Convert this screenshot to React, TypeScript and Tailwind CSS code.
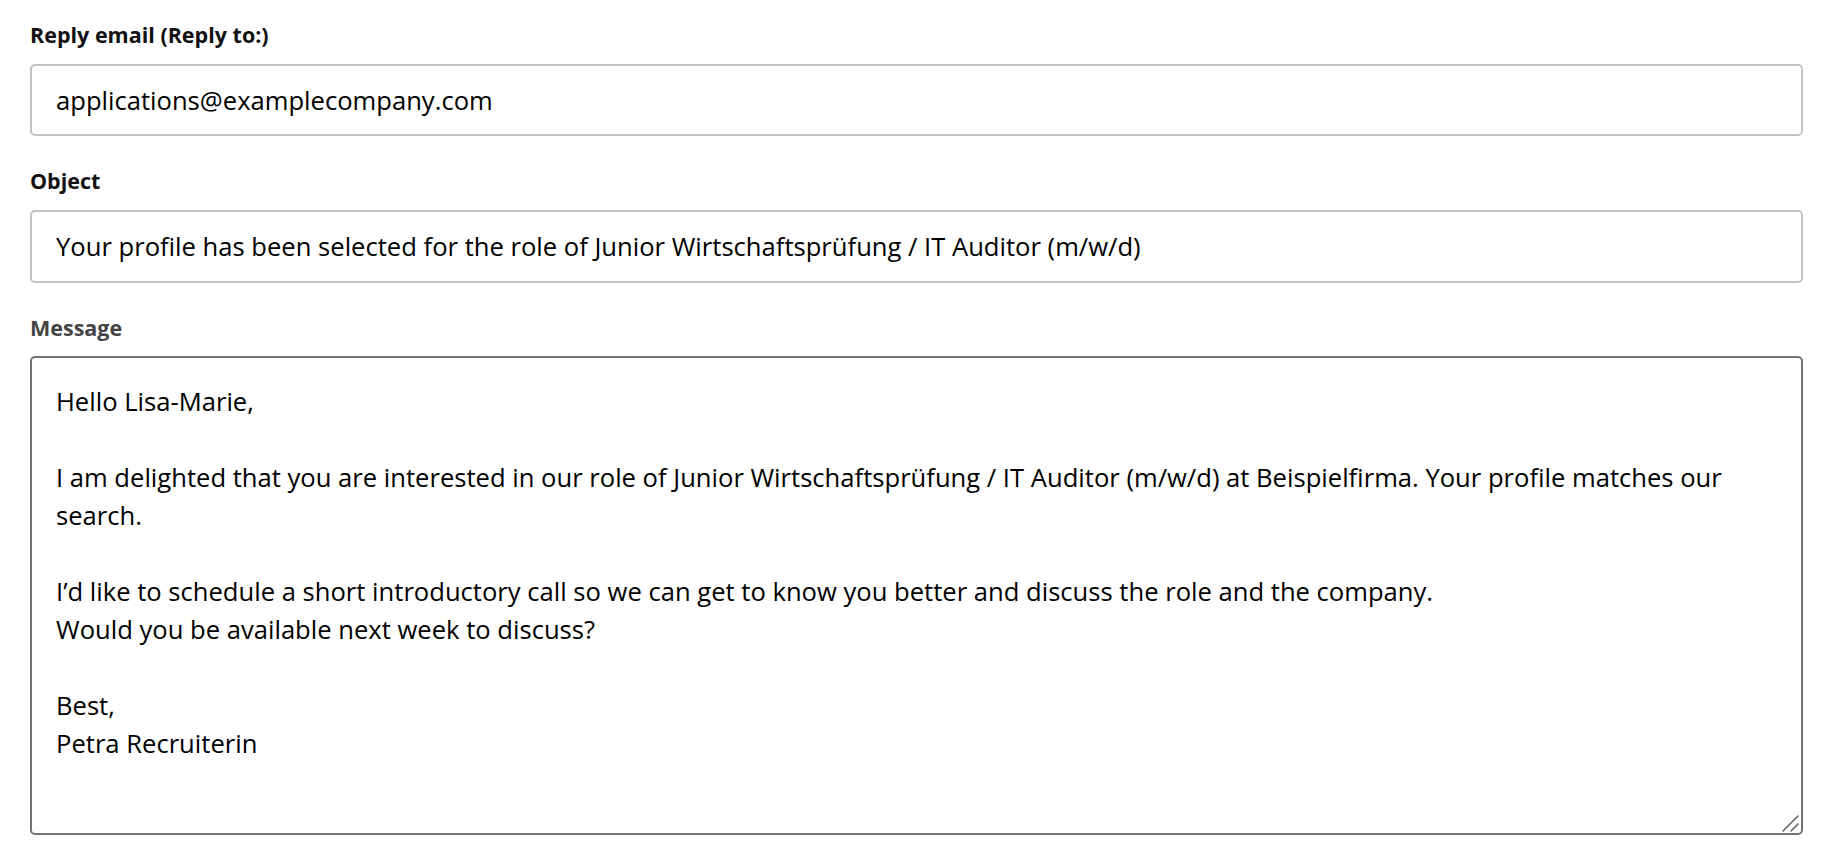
import React from "react";

const message = `Hello Lisa-Marie,

I am delighted that you are interested in our role of Junior Wirtschaftsprüfung / IT Auditor (m/w/d) at Beispielfirma. Your profile matches our search.

I’d like to schedule a short introductory call so we can get to know you better and discuss the role and the company.
Would you be available next week to discuss?

Best,
Petra Recruiterin`;

export default function App() {
  return (
    <div className="w-[1824px] h-[860px] bg-white pl-[30px] pr-[21px] pt-[20px] flex flex-col overflow-hidden font-['Open_Sans','Noto_Sans',sans-serif]">
      <label className="block text-[21.5px] leading-[30px] font-bold text-[#111]">
        Reply email (Reply to:)
      </label>
      <input
        readOnly
        value="applications@examplecompany.com"
        className="mt-[14px] h-[72px] w-full rounded-[5px] border-2 border-[#c2c2c2] px-[24px] text-[25.6px] text-black outline-none"
      />
      <label className="mt-[30px] block text-[21.5px] leading-[30px] font-bold text-[#111]">
        Object
      </label>
      <input
        readOnly
        value="Your profile has been selected for the role of Junior Wirtschaftsprüfung / IT Auditor (m/w/d)"
        className="mt-[14px] h-[73px] w-full rounded-[5px] border-2 border-[#c2c2c2] px-[24px] text-[25.6px] text-black outline-none"
      />
      <label className="mt-[30px] block text-[21.5px] leading-[30px] font-bold text-[#444]">
        Message
      </label>
      <div className="relative mt-[13px] h-[479px] w-full">
        <textarea
          readOnly
          defaultValue={message}
          className="block h-full w-full rounded-[5px] border-2 border-[#737373] px-[24px] pt-[25px] pb-[24px] text-[25.6px] leading-[38px] text-black outline-none resize-none"
        />
        <svg
          className="pointer-events-none absolute right-[3px] bottom-[3px]"
          width="18"
          height="18"
          viewBox="0 0 18 18"
        >
          <line x1="1" y1="17" x2="16" y2="2" stroke="#666" strokeWidth="1.6" strokeLinecap="round" />
          <line x1="9" y1="17" x2="16" y2="10" stroke="#666" strokeWidth="1.6" strokeLinecap="round" />
        </svg>
      </div>
    </div>
  );
}
